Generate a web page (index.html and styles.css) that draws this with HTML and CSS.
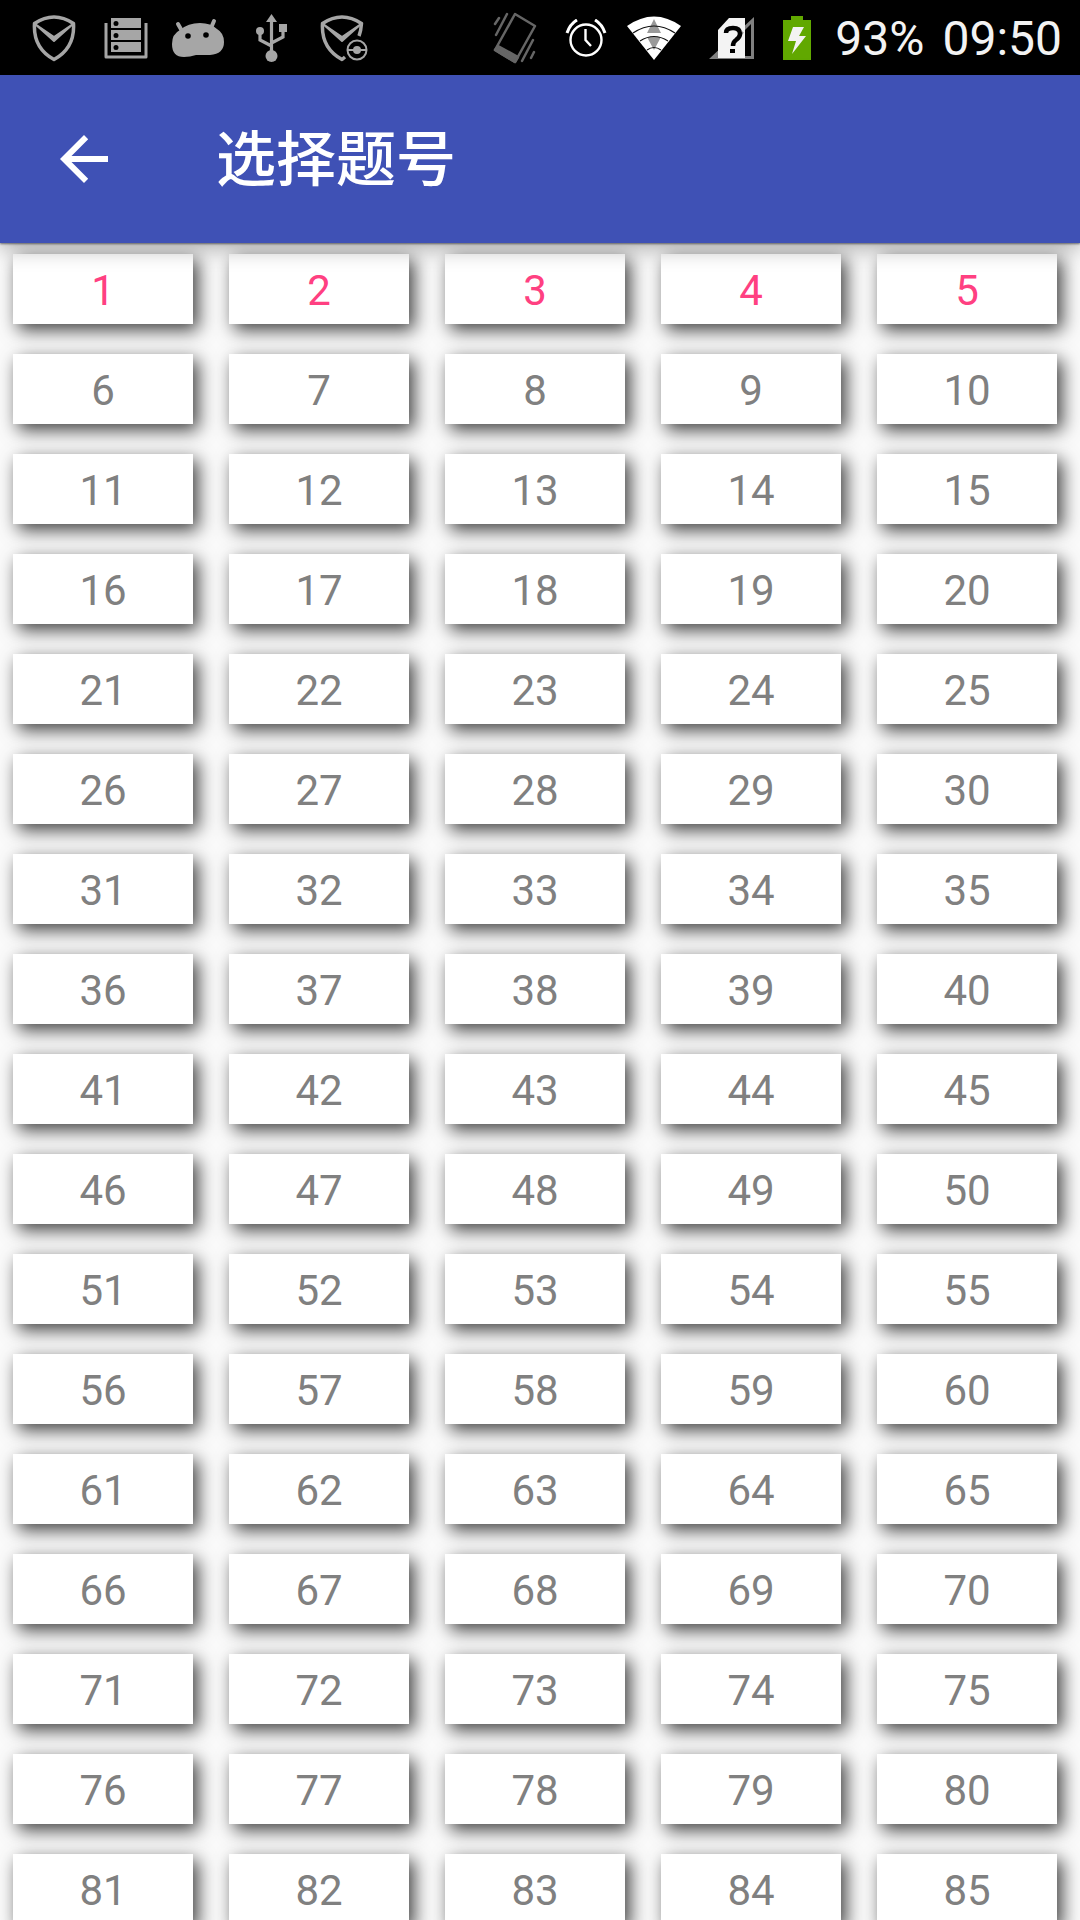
FILE: index.html
```html
<!DOCTYPE html>
<html lang="zh-CN">
<head>
<meta charset="utf-8">
<meta name="viewport" content="width=device-width, initial-scale=1">
<title>选择题号</title>
<link rel="stylesheet" href="styles.css">
</head>
<body>
<div class="status-bar">
  <div class="notifications">
    <svg class="icon" width="44" height="48" viewBox="0 0 44 48" fill="none" stroke="#a6a6a6" stroke-width="3.500" stroke-linejoin="round"><path d="M2.500 9.500Q22-3.500 41.500 9.500Q43 34 22 45.500Q1 34 2.500 9.500Z"/><path d="M3 10L22 23L41 10L22 27Z" fill="#a6a6a6" stroke-width="2"/></svg>
    <svg class="icon" width="44" height="42" viewBox="0 0 44 42" fill="#a6a6a6"><path d="M2 6V40H42V6" fill="none" stroke="#a6a6a6" stroke-width="3" stroke-linejoin="round"/><path fill-rule="evenodd" d="M7 1H37V11H7ZM12 4A2.500 2.500 0 1 0 12 9A2.500 2.500 0 1 0 12 4ZM7 13H37V23H7ZM12 16A2.500 2.500 0 1 0 12 21A2.500 2.500 0 1 0 12 16ZM7 25H37V35H7ZM12 28A2.500 2.500 0 1 0 12 33A2.500 2.500 0 1 0 12 28Z"/></svg>
    <svg class="icon" width="52" height="40" viewBox="0 0 52 40"><path d="M6 6L10 13M42 3L39 10" stroke="#a6a6a6" stroke-width="4" stroke-linecap="round"/><path fill="#a6a6a6" d="M8 12Q16 5 28 5Q39 5 45 11Q52 15 52 24Q52 36 38 37L24 37Q18 39 12 39Q0 39 0 26Q0 16 8 12Z"/><circle cx="16" cy="18" r="2.800"/><circle cx="34" cy="17" r="2.800"/></svg>
    <svg class="icon" width="36" height="48" viewBox="-4 0 36 48" fill="#a6a6a6"><path d="M15.500 4V42M4 17V26L15.500 32M27 12V23L15.500 29" fill="none" stroke="#a6a6a6" stroke-width="3.200"/><path d="M15.500 0L21 8H10ZM23 10H31V18H23Z"/><circle cx="4" cy="17" r="4"/><circle cx="15.500" cy="42" r="6"/></svg>
    <svg class="icon" width="52" height="48" viewBox="-4 0 52 48" fill="none" stroke="#a6a6a6" stroke-width="3.500" stroke-linejoin="round"><path d="M39 22Q41 17 41.500 9.500Q22-3.500 2.500 9.500Q1 34 22 45.500L25 43"/><path d="M3 10L22 23L41 10L22 27Z" fill="#a6a6a6" stroke-width="2"/><circle cx="37" cy="36" r="9.500" stroke-width="2"/><path d="M28 36H46" stroke-width="2"/><circle cx="37" cy="36" r="4" fill="#a6a6a6" stroke="none"/></svg>
  </div>
  <div class="system">
    <svg class="icon" width="44" height="52" viewBox="0 0 44 52" fill="none" stroke="#666" stroke-width="2.500" stroke-linecap="round" stroke-linejoin="round"><path d="M22 2L42 14L22 50L2 38Z"/><path d="M5 34L25 45L22 50L2 38Z" fill="#666"/><path d="M14 2L3 23M6 6L2 12M40 28L29 49M41 40L38 46"/></svg>
    <svg class="icon" width="42" height="38" viewBox="0 0 42 38" fill="none" stroke="#fff" stroke-width="2.400"><circle cx="21" cy="21" r="15.500"/><path d="M20.500 10V21L26 27"/><path d="M2 14Q5 5 12 1M30 1Q37 5 40 14" stroke-width="3"/></svg>
    <svg class="icon wifi" width="54" height="44" viewBox="0 0 54 44"><path fill="#fff" d="M0 10Q27-9 54 10L27 44Z"/><path fill="#999" d="M27 3L34 17H20ZM20 21H34L27 34Z"/><path d="M6 17Q27 3 48 17M13 25Q27 16 41 25M20 34Q27 29 34 34" fill="none" stroke="#111" stroke-width="1.200"/></svg>
    <svg class="icon" width="46" height="42" viewBox="0 0 46 42"><path fill="#808080" fill-rule="evenodd" d="M45 0V42H0ZM42 7L10 39H42Z"/><path fill="#f3f3f3" d="M20 1H36V41H9V13Z"/><path d="M26 24L34 15" stroke="#888" stroke-width="2"/><path d="M17 16Q17 11 24 11Q31 11 31 17Q31 20 27 23Q24 25 24 29" fill="none" stroke="#000" stroke-width="4.500"/><path d="M21 32H26V36H21Z"/></svg>
    <svg class="icon" width="28" height="44" viewBox="0 0 28 44"><path fill="#61a800" d="M8 0H20V4H28V44H0V4H8Z"/><path fill="#f3f3f3" d="M10 11H21L16 20H23L9 38L13 25H5Z"/></svg>
    <div class="readout">
      <span>93%</span>
      <time>09:50</time>
    </div>
  </div>
</div>
<header class="app-bar">
  <button class="back" type="button" aria-label="返回"><svg class="icon" width="48" height="48" viewBox="0 0 48 48"><path fill="#fff" d="M48 21H11.500L28.200 4.200L24 0L0 24L24 48L28.200 43.800L11.500 27H48Z"/></svg></button>
  <h1 class="title">选择题号</h1>
</header>
<main class="grid">
  <button class="cell done">1</button><button class="cell done">2</button><button class="cell done">3</button><button class="cell done">4</button><button class="cell done">5</button>
  <button class="cell">6</button><button class="cell">7</button><button class="cell">8</button><button class="cell">9</button><button class="cell">10</button>
  <button class="cell">11</button><button class="cell">12</button><button class="cell">13</button><button class="cell">14</button><button class="cell">15</button>
  <button class="cell">16</button><button class="cell">17</button><button class="cell">18</button><button class="cell">19</button><button class="cell">20</button>
  <button class="cell">21</button><button class="cell">22</button><button class="cell">23</button><button class="cell">24</button><button class="cell">25</button>
  <button class="cell">26</button><button class="cell">27</button><button class="cell">28</button><button class="cell">29</button><button class="cell">30</button>
  <button class="cell">31</button><button class="cell">32</button><button class="cell">33</button><button class="cell">34</button><button class="cell">35</button>
  <button class="cell">36</button><button class="cell">37</button><button class="cell">38</button><button class="cell">39</button><button class="cell">40</button>
  <button class="cell">41</button><button class="cell">42</button><button class="cell">43</button><button class="cell">44</button><button class="cell">45</button>
  <button class="cell">46</button><button class="cell">47</button><button class="cell">48</button><button class="cell">49</button><button class="cell">50</button>
  <button class="cell">51</button><button class="cell">52</button><button class="cell">53</button><button class="cell">54</button><button class="cell">55</button>
  <button class="cell">56</button><button class="cell">57</button><button class="cell">58</button><button class="cell">59</button><button class="cell">60</button>
  <button class="cell">61</button><button class="cell">62</button><button class="cell">63</button><button class="cell">64</button><button class="cell">65</button>
  <button class="cell">66</button><button class="cell">67</button><button class="cell">68</button><button class="cell">69</button><button class="cell">70</button>
  <button class="cell">71</button><button class="cell">72</button><button class="cell">73</button><button class="cell">74</button><button class="cell">75</button>
  <button class="cell">76</button><button class="cell">77</button><button class="cell">78</button><button class="cell">79</button><button class="cell">80</button>
  <button class="cell">81</button><button class="cell">82</button><button class="cell">83</button><button class="cell">84</button><button class="cell">85</button>
</main>
</body>
</html>
```
FILE: styles.css
```css
* {
  box-sizing: border-box;
}

body {
  margin: 0;
  height: 100vh;
  display: flex;
  flex-direction: column;
  overflow: hidden;
  background: #fafafa;
  font-family: Roboto, "Noto Sans CJK SC", sans-serif;
}

.icon {
  display: block;
  flex: none;
}

.status-bar {
  flex: none;
  height: 75px;
  padding: 0 18px;
  display: flex;
  align-items: center;
  justify-content: space-between;
  background: #000;
  color: #f3f3f3;
}

.notifications {
  display: grid;
  grid-template-columns: repeat(5, 72px);
  align-items: center;
  justify-items: center;
}

.system {
  display: flex;
  align-items: center;
  gap: 28px;
}

.wifi {
  margin-left: -8px;
}

.readout {
  display: flex;
  gap: 18px;
  margin-left: -4px;
  padding-top: 3px;
  font-size: 48px;
  line-height: 56px;
}

.app-bar {
  flex: none;
  height: 168px;
  padding-left: 60px;
  display: flex;
  align-items: center;
  gap: 108px;
  background: #3f51b5;
  box-shadow: 0 1px 2px rgba(0, 0, 0, 0.5), 0 6px 20px rgba(0, 0, 0, 0.3);
  position: relative;
  z-index: 1;
}

.back {
  padding: 0;
  border: 0;
  background: none;
}

.title {
  margin: 0;
  padding-top: 3px;
  color: #fff;
  font-size: 60px;
  font-weight: 500;
  line-height: 80px;
}

.grid {
  flex: 1;
  min-height: 0;
  overflow: hidden;
  display: grid;
  grid-template-columns: repeat(5, 1fr);
  grid-auto-rows: 70px;
  gap: 30px 36px;
  padding: 11px 23px 0 13px;
}

.cell {
  padding: 4px 0 0;
  border: 0;
  background: #fff;
  box-shadow: 5px 6px 17px rgba(0, 0, 0, 0.75);
  color: #808080;
  font-family: inherit;
  font-size: 42px;
  line-height: 66px;
}

.done {
  color: #ff4081;
}
```
